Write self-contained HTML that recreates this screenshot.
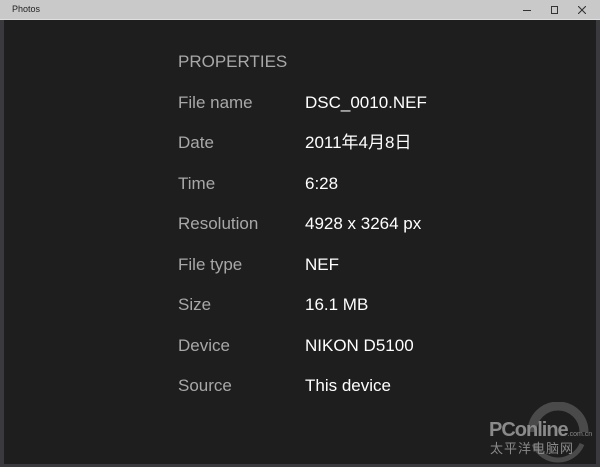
<!DOCTYPE html>
<html><head><meta charset="utf-8"><style>
*{margin:0;padding:0;box-sizing:border-box}
body{width:600px;height:467px;background:#3a3a3e;position:relative;overflow:hidden;font-family:"Liberation Sans","Noto Sans CJK SC",sans-serif}
#win{position:absolute;left:4px;top:0;width:592px;height:464px;background:#1e1e1e}
#tb{position:absolute;left:-4px;top:0;width:600px;height:20px;background:#c9c9c9;border-bottom:1px solid #e0e0e0}
#tb span{position:absolute;left:12px;top:4px;font-size:9px;color:#222}
.r{position:absolute;font-size:17px;line-height:20px;height:20px;white-space:nowrap}
.l{left:174px;color:#a8a8a8}
.v{left:301px;color:#fff}
</style></head><body>
<div id="win">
<div id="tb"><span>Photos</span>
<div style="position:absolute;left:523px;top:10px;width:8px;height:1px;background:#333"></div>
<div style="position:absolute;left:551px;top:6px;width:7px;height:8px;border:1px solid #333"></div>
<svg style="position:absolute;left:578px;top:6px" width="8" height="8"><path d="M0 0L8 8M8 0L0 8" stroke="#333" stroke-width="1.1"/></svg>
</div>
<div class="r l" style="top:52px">PROPERTIES</div>
<div class="r l" style="top:93px">File name</div><div class="r v" style="top:93px">DSC_0010.NEF</div>
<div class="r l" style="top:133px">Date</div><div class="r v" style="top:133px">2011年4月8日</div>
<div class="r l" style="top:174px">Time</div><div class="r v" style="top:174px">6:28</div>
<div class="r l" style="top:214px">Resolution</div><div class="r v" style="top:214px">4928 x 3264 px</div>
<div class="r l" style="top:255px">File type</div><div class="r v" style="top:255px">NEF</div>
<div class="r l" style="top:295px">Size</div><div class="r v" style="top:295px">16.1 MB</div>
<div class="r l" style="top:336px">Device</div><div class="r v" style="top:336px">NIKON D5100</div>
<div class="r l" style="top:376px">Source</div><div class="r v" style="top:376px">This device</div>
</div>
<svg style="position:absolute;left:522px;top:402px" width="70" height="65"><path d="M10 30A26 26 0 0 1 62 30" fill="none" stroke="#4a4a4a" stroke-width="9"/><path d="M12 42A26 26 0 0 0 60 42" fill="none" stroke="#4a4a4a" stroke-width="5"/></svg>
<div style="position:absolute;left:489px;top:419px;font-size:20px;font-weight:bold;color:#8a8a8a;letter-spacing:-1px">PConline<span style="font-size:7px;font-weight:normal;letter-spacing:0">.com.cn</span></div>
<div style="position:absolute;left:490px;top:440px;font-size:13px;line-height:15px;color:#8a8a8a;letter-spacing:1px;font-family:'Noto Sans CJK SC',sans-serif">太平洋电脑网</div>
</body></html>
